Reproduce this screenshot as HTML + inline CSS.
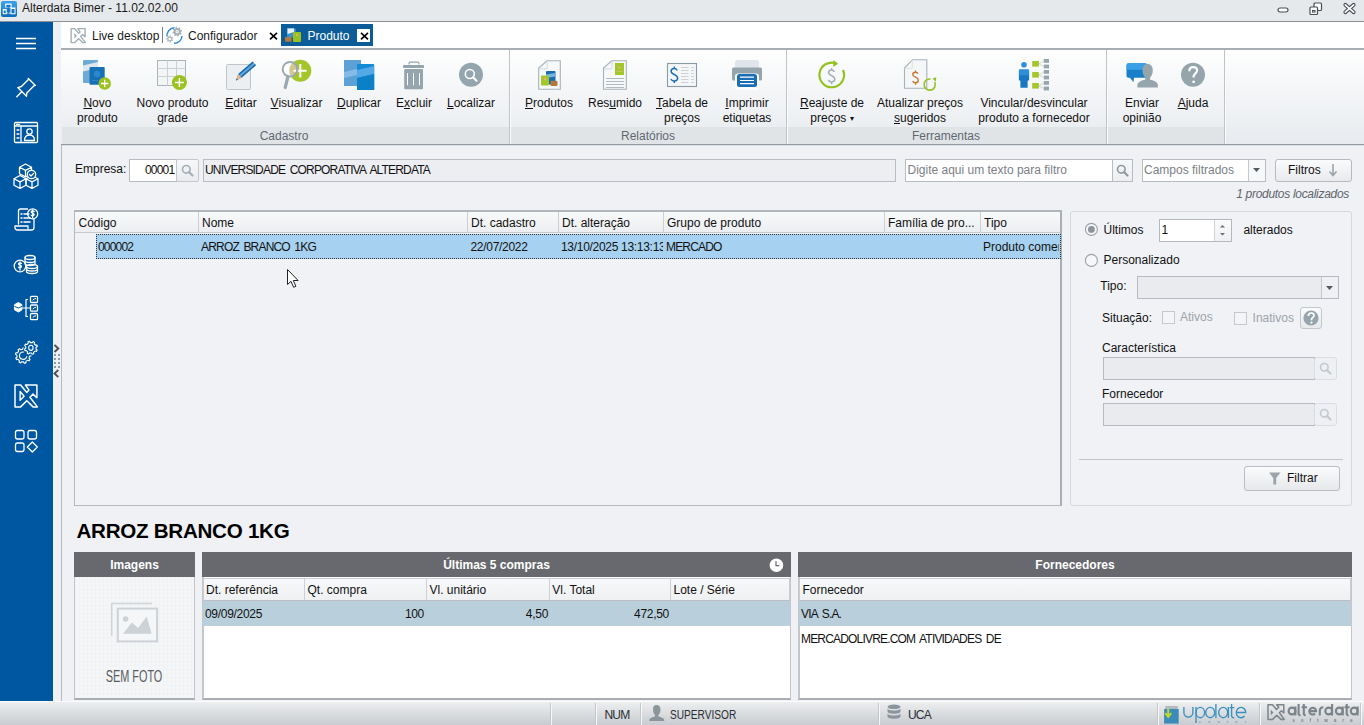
<!DOCTYPE html>
<html><head><meta charset="utf-8">
<style>
*{margin:0;padding:0;box-sizing:border-box}
html,body{width:1364px;height:725px;overflow:hidden;background:#eff1f5;font-family:"Liberation Sans",sans-serif;font-size:12px;color:#1e1e1e;position:relative}
.a{position:absolute}
svg{position:absolute;overflow:visible}
.t{position:absolute;white-space:nowrap;line-height:14px}
.u{letter-spacing:-0.82px;word-spacing:2px}
.d{letter-spacing:-0.3px}
#title{left:0;top:0;width:1364px;height:22px;background:#e6e9ec;border-bottom:1px solid #8d9197}
#side{left:0;top:22px;width:53px;height:679px;background:#0057a1}
#strip{left:53px;top:22px;width:8px;height:679px;background:#eef0f4}
#tabs{left:61px;top:22px;width:1303px;height:26px;background:#fff}
#ribbon{left:61px;top:48px;width:1303px;height:97px;border-top:2px solid #a9aeb4;border-bottom:1px solid #92979d;background:linear-gradient(#fefefe 0%,#f3f5f7 45%,#e8ebef 100%)}
.band{position:absolute;top:127px;height:17px;background:#e1e4e7}
.rb{position:absolute;top:95.6px;width:120px;text-align:center;line-height:15px;white-space:nowrap;color:#111}
.rb i{font-style:normal;text-decoration:underline}
.gl{position:absolute;top:129px;color:#5f6870;line-height:14px;width:200px;text-align:center}
.sep{position:absolute;top:50px;width:2px;height:94px;border-left:1px solid #bfc4c9;border-right:1px solid #fbfbfc}
#status{left:0;top:701px;width:1364px;height:24px;background:linear-gradient(#eceef0,#c9ccd0);border-top:1px solid #fbfbfc}
.inp{position:absolute;background:#fff;border:1px solid #b8bcc2}
.dis{position:absolute;background:#e8eaee;border:1px solid #b8bcc2}
.btn{position:absolute;border:1px solid #b5b9bf;border-radius:2px;background:linear-gradient(#fbfbfc,#e4e7ea)}
.sb{position:absolute;left:0;width:53px}
</style></head><body>
<!-- Title bar -->
<div id="title" class="a">
  <div class="t" style="left:22px;top:1px;color:#1a1a1a">Alterdata Bimer - 11.02.02.00</div>
</div>
<svg style="left:1px;top:1px" width="16" height="16" viewBox="1 1 16 16"><defs><linearGradient id="tg" x1="0" y1="0" x2="0" y2="1"><stop offset="0" stop-color="#3a9fe8"/><stop offset=".45" stop-color="#2b92e0"/><stop offset=".5" stop-color="#167ccc"/><stop offset="1" stop-color="#0d6cbc"/></linearGradient></defs><rect x="1" y="1" width="16" height="16" rx="2" fill="url(#tg)"/><path d="M5.2 3.6h6.4v4h-6.4z M2.7 9h4v5.3h-4z M10.5 7.6h5v6.7h-5z" fill="#fff"/><path d="M6.3 4.7h4.2v2.5h-4.2z M3.7 10.6h2v2.7h-2z M11.5 9h3v4.3h-3z" fill="#1277c6"/><path d="M6.7 13h3.8" stroke="#fff" stroke-width="1"/><path d="M8.4 7.6v6" stroke="#1277c6" stroke-width="1.2"/></svg>
<svg style="left:1277px;top:7px" width="12" height="6"><rect x="1" y="1" width="10" height="4" rx="2" fill="#fff" stroke="#4a4d55" stroke-width="1.2"/></svg>
<svg style="left:1309px;top:2px" width="14" height="13"><rect x="5" y="1" width="7.5" height="7.5" rx="1" fill="#fff" stroke="#4a4d55" stroke-width="1.2"/><rect x="1" y="5" width="7.5" height="7.5" rx="1" fill="#fff" stroke="#4a4d55" stroke-width="1.2"/><rect x="3.5" y="8.5" width="2.5" height="1.6" fill="none" stroke="#4a4d55" stroke-width="1"/></svg>
<svg style="left:1343px;top:3px" width="13" height="11"><path d="M2.3 1.8L10.7 9.2M10.7 1.8L2.3 9.2" stroke="#4a4d55" stroke-width="3.8" stroke-linecap="round"/><path d="M2.3 1.8L10.7 9.2M10.7 1.8L2.3 9.2" stroke="#fff" stroke-width="1.6" stroke-linecap="round"/></svg>

<!-- Sidebar -->
<div id="side" class="a"></div>
<div id="strip" class="a"></div>
<div class="a" style="left:61px;top:145px;width:1303px;height:1px;background:#dde0e4"></div>
<div class="a" style="left:61px;top:145px;width:1px;height:556px;background:#b5bac1"></div>
<svg style="left:0;top:0" width="53" height="700" fill="none" stroke="#fff" stroke-width="1.3" stroke-linejoin="round" stroke-linecap="round">
<!-- hamburger -->
<path d="M16 38.5h20M16 43.5h20M16 48.5h20" stroke-width="1.4" stroke-linecap="butt"/>
<!-- pin -->
<path d="M16.8 96.8l4.7-4.7M17.8 87.6l3.6-1.1 6.8-6.8.2-1.3 7 7-1.4.3-7.2 7.2-.3 3.3z" stroke-width="1.4"/>
<!-- contact card -->
<rect x="14.5" y="122.5" width="23" height="20" rx="1"/>
<path d="M14.5 126h23M21 126v16.5M16.5 124.3h3M17 130h2M17 134h2M17 138h2"/>
<circle cx="29.5" cy="131.5" r="2.7"/>
<path d="M24.5 140.5c0-3.5 2-5.3 5-5.3s5 1.8 5 5.3z"/>
<!-- boxes -->
<path d="M25.5 164l6 3.2v6.5l-6 3.2-6-3.2v-6.5z M19.5 167.2l6 3.2 6-3.2M25.5 170.4v6.5"/>
<path d="M20 175.5l6 3.2v6.5l-6 3.2-6-3.2v-6.5z M14 178.7l6 3.2 6-3.2M20 181.9v6.5"/>
<path d="M32 175.5l6 3.2v6.5l-6 3.2-6-3.2v-6.5z M26 178.7l6 3.2 6-3.2M32 181.9v6.5"/>
<circle cx="31.5" cy="174.5" r="4.2" fill="#0057a1"/>
<path d="M29.5 174.5l1.5 1.5 2.5-2.5"/>
<!-- doc $ -->
<path d="M18.5 224v-13a2 2 0 0 1 2-2h7M34 219v8.5a2.5 2.5 0 0 1-2.5 2.5h-14a2.5 2.5 0 0 1-2.5-2.5v-1.5h13v2.5"/>
<circle cx="32.7" cy="213.8" r="5"/>
<path d="M34.2 211.5c-.5-.8-3-1-3 .5s3 1 3 2.6-2.5 1.5-3 .6M32.7 210v7.6"/>
<path d="M21 214h1M21 218h1M21 222h1M24 214h5M24 218h6M24 222h6" stroke-width="1.5"/>
<!-- coins -->
<circle cx="20" cy="266" r="5.8"/>
<path d="M21.5 263.5c-.5-.8-3-1-3 .5s3 1 3 2.6-2.5 1.5-3 .6M20 262v8"/>
<ellipse cx="30" cy="257.5" rx="5" ry="2"/>
<path d="M25 257.5v6c0 1.1 2.2 2 5 2s5-.9 5-2v-6M25 260.5c0 1.1 2.2 2 5 2s5-.9 5-2"/>
<ellipse cx="32" cy="266.5" rx="5.5" ry="2"/>
<path d="M26.5 266.5v5c0 1.1 2.5 2 5.5 2s5.5-.9 5.5-2v-5M26.5 269c0 1.1 2.5 2 5.5 2s5.5-.9 5.5-2"/>
<!-- hierarchy -->
<path d="M27.5 299.5h-1.5v17h1.5M26 308h4M22.5 308h3.5" stroke-width="1.2"/>
<rect x="30.5" y="296.3" width="7" height="6.2" rx="1"/><rect x="30.5" y="305" width="7" height="6.2" rx="1"/><rect x="30.5" y="313.5" width="7" height="6.2" rx="1"/>
<path d="M33 300l1.2-1 1.5-.5M33 308.8l1.2-1 1.5-.5M33 317.3l1.2-1 1.5-.5" stroke-width="1"/>
<path d="M14.8 304.5l3.5-2 3.5 2v5.5l-3.5 2-3.5-2z" fill="#fff" stroke-width="1"/>
<path d="M14.8 306.5l3.5 1.5 3.5-1.5" stroke="#0057a1" stroke-width="1"/>
<!-- gears -->
<path d="M36.07 348.32 L35.95 349.04 L37.13 349.97 L36.40 351.46 L34.94 351.07 L34.19 351.83 L33.59 352.25 L33.77 353.74 L32.20 354.27 L31.44 352.97 L30.38 352.97 L29.66 352.85 L28.73 354.03 L27.24 353.30 L27.63 351.84 L26.87 351.09 L26.45 350.49 L24.96 350.67 L24.43 349.10 L25.73 348.34 L25.73 347.28 L25.85 346.56 L24.67 345.63 L25.40 344.14 L26.86 344.53 L27.61 343.77 L28.21 343.35 L28.03 341.86 L29.60 341.33 L30.36 342.63 L31.42 342.63 L32.14 342.75 L33.07 341.57 L34.56 342.30 L34.17 343.76 L34.93 344.51 L35.35 345.11 L36.84 344.93 L37.37 346.50 L36.07 347.26z" stroke-width="1.1"/>
<ellipse cx="30.9" cy="347.8" rx="2.2" ry="2.6" stroke-width="1.1"/>
<path d="M31.00 355.87 L29.46 356.34 L29.22 357.46 L28.94 358.20 L30.01 359.40 L29.00 360.82 L27.51 360.19 L26.61 360.89 L25.92 361.28 L25.97 362.89 L24.29 363.32 L23.55 361.89 L22.41 361.85 L21.63 361.70 L20.64 362.97 L19.07 362.22 L19.43 360.65 L18.58 359.88 L18.08 359.27 L16.50 359.60 L15.78 358.01 L17.07 357.04 L16.91 355.91 L16.92 355.12 L15.50 354.35 L15.97 352.68 L17.58 352.76 L18.18 351.79 L18.70 351.19 L18.10 349.70 L19.54 348.71 L20.72 349.81 L21.80 349.46 L22.58 349.33 L23.09 347.80" stroke-width="1.1"/>
<path d="M26.8 356.5A3.7 3.7 0 1 1 23.5 352" stroke-width="1.1"/>
<!-- X logo -->
<path d="M15 385h5.6l6.2 7.4 2.2-2.3-3.6-5.1h11.5v12.7l-3.9-3.6-3.1 3.1 7.5 9.7h-4.4l-6.2-6.2-6.2 6.2h-5.6z" stroke-width="1.5"/>
<path d="M20.1 391.5l4 4.8-4 4z" stroke-width="1.4"/>
<!-- apps -->
<rect x="15.5" y="430.5" width="8.5" height="8.5" rx="2"/>
<rect x="28" y="430.5" width="8.5" height="8.5" rx="2"/>
<rect x="15.5" y="443" width="8.5" height="8.5" rx="2"/>
<path d="M32.3 442l5 5-5 5-5-5z"/>
</svg>
<svg style="left:53px;top:344px" width="8" height="34"><path d="M1.5 1l3.8 3.5-3.8 3.5M5.3 26l-3.8 3.5 3.8 3.5" fill="none" stroke="#4d5156" stroke-width="1.9"/><g fill="#8b9ca2"><rect x="1" y="10" width="2" height="2"/><rect x="5" y="10" width="2" height="2"/><rect x="1" y="14" width="2" height="2"/><rect x="5" y="14" width="2" height="2"/><rect x="1" y="18" width="2" height="2"/><rect x="5" y="18" width="2" height="2"/><rect x="1" y="22" width="2" height="2"/><rect x="5" y="22" width="2" height="2"/></g></svg>

<!-- Tabs -->
<div id="tabs" class="a"></div>
<svg style="left:70px;top:28px" width="16" height="15" viewBox="14 384 23.5 23.5"><path d="M15 385h5.6l6.2 7.4 2.2-2.3-3.6-5.1h11.5v12.7l-3.9-3.6-3.1 3.1 7.5 9.7h-4.4l-6.2-6.2-6.2 6.2h-5.6z" fill="none" stroke="#a3afb5" stroke-width="2.2" stroke-linejoin="round"/><path d="M20.1 391.5l4 4.8-4 4z" fill="#a3afb5"/></svg>
<div class="t" style="left:92px;top:28.5px;color:#1a1a1a">Live desktop</div>
<div class="a" style="left:162px;top:27px;width:1px;height:16px;background:#7a7d82"></div>
<svg style="left:166px;top:27px" width="17" height="17" viewBox="0 0 17 17"><path d="M1 9.5A7.8 7.8 0 0 1 8.5 0.8" fill="none" stroke="#2f8ddb" stroke-width="1.5"/><path d="M16 9A7.8 7.8 0 0 1 8 16.3" fill="none" stroke="#2f8ddb" stroke-width="1.5"/><path d="M14.83 5.44 L14.71 5.86 L15.64 6.77 L15.04 7.75 L13.81 7.33 L13.24 7.78 L12.87 8.00 L12.88 9.30 L11.76 9.57 L11.19 8.40 L10.46 8.33 L10.04 8.21 L9.13 9.14 L8.15 8.54 L8.57 7.31 L8.12 6.74 L7.90 6.37 L6.60 6.38 L6.33 5.26 L7.50 4.69 L7.57 3.96 L7.69 3.54 L6.76 2.63 L7.36 1.65 L8.59 2.07 L9.16 1.62 L9.53 1.40 L9.52 0.10 L10.64 -0.17 L11.21 1.00 L11.94 1.07 L12.36 1.19 L13.27 0.26 L14.25 0.86 L13.83 2.09 L14.28 2.66 L14.50 3.03 L15.80 3.02 L16.07 4.14 L14.90 4.71z" fill="#a6b0b6"/><circle cx="11.2" cy="4.7" r="1.6" fill="#fff"/><circle cx="11.2" cy="4.7" r=".7" fill="#a6b0b6"/><path d="M6.49 12.17 L6.43 12.53 L7.25 13.24 L6.77 14.11 L5.73 13.79 L5.26 14.17 L4.95 14.34 L4.91 15.43 L3.93 15.60 L3.53 14.59 L2.94 14.46 L2.60 14.32 L1.73 14.97 L0.99 14.31 L1.53 13.36 L1.26 12.82 L1.16 12.47 L0.11 12.19 L0.17 11.20 L1.24 11.04 L1.50 10.49 L1.71 10.20 L1.27 9.20 L2.08 8.62 L2.88 9.36 L3.46 9.22 L3.83 9.20 L4.33 8.24 L5.29 8.51 L5.21 9.60 L5.69 9.97 L5.93 10.24 L7.00 10.03 L7.38 10.95 L6.48 11.56z" fill="#b3bcc1"/><circle cx="3.8" cy="11.9" r="1.2" fill="#fff"/></svg>
<div class="t" style="left:188px;top:28.5px;color:#1a1a1a">Configurador</div>
<svg style="left:269px;top:32px" width="9" height="8"><path d="M1 .8l7 6.5M8 .8l-7 6.5" stroke="#000" stroke-width="1.6"/></svg>
<div class="a" style="left:281px;top:24px;width:92px;height:22px;background:#0b5c98"></div>
<svg style="left:285px;top:27px" width="17" height="16"><path d="M2 1h7.5l1.5 1.5v8H2z" fill="#3c8fd6"/><path d="M2.5 1.5h6.5v3.5l-6.5 2z" fill="#e8f2fb"/><rect x="0" y="10" width="6.6" height="4.8" rx=".8" fill="#b07a3e"/><rect x="8" y="5" width="8" height="10" rx="1" fill="#97c11f"/><circle cx="12" cy="8" r="1" fill="#f4a88a"/></svg>
<div class="t" style="left:307.5px;top:28.5px;color:#fff">Produto</div>
<div class="a" style="left:357px;top:29px;width:13px;height:13px;background:#fff"></div>
<svg style="left:359.5px;top:31.5px" width="9" height="8"><path d="M1 .8l7 6.5M8 .8l-7 6.5" stroke="#000" stroke-width="1.6"/></svg>

<!-- Ribbon -->
<div id="ribbon" class="a"></div>
<div class="band" style="left:62px;width:1162px"></div>
<div class="sep" style="left:509px"></div>
<div class="sep" style="left:786px"></div>
<div class="sep" style="left:1106px"></div>
<div class="sep" style="left:1224px"></div>
<div class="gl" style="left:184px">Cadastro</div>
<div class="gl" style="left:548px">Relatórios</div>
<div class="gl" style="left:846px">Ferramentas</div>
<div class="rb" style="left:37.4px"><i>N</i>ovo<br>produto</div>
<div class="rb" style="left:112.5px">Novo produto<br><i>g</i>rade</div>
<div class="rb" style="left:181px"><i>E</i>ditar</div>
<div class="rb" style="left:236.5px"><i>V</i>isualizar</div>
<div class="rb" style="left:299px"><i>D</i>uplicar</div>
<div class="rb" style="left:354px">E<i>x</i>cluir</div>
<div class="rb" style="left:411px"><i>L</i>ocalizar</div>
<div class="rb" style="left:489px"><i>P</i>rodutos</div>
<div class="rb" style="left:555px">Res<i>u</i>mido</div>
<div class="rb" style="left:622px"><i>T</i>abela de<br>preços</div>
<div class="rb" style="left:687px"><i>I</i>mprimir<br>etiquetas</div>
<div class="rb" style="left:772px"><i>R</i>eajuste de<br>preços <span style="font-size:8px;vertical-align:1px">▾</span></div>
<div class="rb" style="left:860px">Atualizar preços<br><i>s</i>ugeridos</div>
<div class="rb" style="left:974px">Vincular/desvincular<br>produto a fornecedor</div>
<div class="rb" style="left:1082px">Enviar<br>opinião</div>
<div class="rb" style="left:1133px"><i>A</i>juda</div>
<svg style="left:0;top:0" width="1364" height="145">
<!-- novo produto -->
<rect x="83" y="60" width="15" height="23" rx="1" fill="#6eaad6"/>
<path d="M83 65.5l15-3.5v6l-15 3.5z" fill="#dfe7ee"/>
<rect x="89.5" y="67" width="15.2" height="17.8" rx="1" fill="#1670b5"/>
<circle cx="97" cy="74" r="3.2" fill="#2d86d0"/>
<path d="M92 80.5h6" stroke="#3b8bd0" stroke-width=".8"/>
<circle cx="104.7" cy="83.5" r="6.2" fill="#9cc21f"/>
<path d="M101 83.5h7.4M104.7 79.8v7.4" stroke="#fff" stroke-width="1.3"/>
<!-- novo produto grade -->
<rect x="157.5" y="60.5" width="28" height="25" fill="#f3f5f7" stroke="#aab4bb"/>
<path d="M167.5 60.5v25M176.5 60.5v25M157.5 68.5h28M157.5 76.5h28" stroke="#c8d0d6"/>
<circle cx="179.4" cy="82.5" r="7.5" fill="#9cc21f"/>
<path d="M175 82.5h8.8M179.4 78.1v8.8" stroke="#fff" stroke-width="1.5"/>
<!-- editar -->
<rect x="226.5" y="64.5" width="24" height="25" rx="1.2" fill="#eceff2" stroke="#bfc5cb"/>
<path d="M236 80.5l2.2-6.5 14.5-12.5 3.3 3.8-14.5 12.5z" fill="#6aa9d6"/>
<path d="M238.2 74l14.5-12.5 1 1.2-14.5 12.5zM241.5 77.8l14.5-12.5-1-1.2-14.5 12.5z" fill="#1a6fb4"/>
<path d="M236 80.5l2.2-6.5 3.3 3.8z" fill="#e8b47a"/>
<path d="M236 80.5l.8-2.3 1.3 1.5z" fill="#1a6fb4"/>
<!-- visualizar -->
<circle cx="300.3" cy="70.7" r="11" fill="#a5c62a"/>
<circle cx="290" cy="69.3" r="7.3" fill="#fff"/>
<clipPath id="lens"><circle cx="290" cy="69.3" r="7.3"/></clipPath>
<circle cx="300.3" cy="70.7" r="11" fill="#d3c592" clip-path="url(#lens)"/>
<path d="M293.5 70.7h13M300.3 64v13.5" stroke="#fff" stroke-width="2"/>
<circle cx="290" cy="69.3" r="7.3" fill="none" stroke="#9aa9b1" stroke-width="2"/>
<path d="M288 76.5l-2.8 11" stroke="#9aa9b1" stroke-width="3.2" stroke-linecap="round"/>
<!-- duplicar -->
<rect x="344" y="60" width="17" height="26" fill="#5da0d6"/>
<path d="M344 72l17-4v6l-17 4z" fill="#85bbe6"/>
<rect x="357" y="64" width="17.2" height="26" rx="1" fill="#138bd4"/>
<path d="M357 70l17.2-4v8l-17.2 4z" fill="#52a9e6"/>
<path d="M357 78l17.2-4v16h-17.2z" fill="#0b80c6"/>
<!-- excluir -->
<g fill="#94a5ad"><path d="M408.5 64.5v-1.5a1.5 1.5 0 0 1 1.5-1.5h8a1.5 1.5 0 0 1 1.5 1.5v1.5h-1.2v-1.7h-8.6v1.7z"/><rect x="403" y="65" width="21" height="3" rx=".8"/><rect x="404.2" y="69" width="18.8" height="20.2" rx="1"/></g>
<path d="M407.5 73v12.3M413.5 73v12.3M419.5 73v12.3" stroke="#fff" stroke-width="1"/>
<!-- localizar -->
<circle cx="471" cy="74.8" r="12" fill="#94a5ad"/>
<circle cx="469.8" cy="74" r="4.5" fill="none" stroke="#fff" stroke-width="1.6"/>
<path d="M473 77.2l3.5 3.5" stroke="#fff" stroke-width="2" stroke-linecap="round"/>
</svg>
<svg style="left:0;top:0" width="1364" height="145">
<!-- produtos -->
<path d="M538.7 68l8.3-7.2h13.3v28.4h-21.6z" fill="#f6f8fa" stroke="#a7b3b9" stroke-width="1.1"/>
<path d="M547.2 61v7.8h-8" fill="none" stroke="#d5dbe0" stroke-width="1"/>
<rect x="546" y="71" width="9.5" height="13.5" rx="1" fill="#1a6db0"/>
<path d="M546 74.5l9.5-1.5v3.5l-9.5 1.5z" fill="#78b4e0"/>
<rect x="541" y="75.5" width="8" height="10" rx=".8" fill="#a2c72a"/>
<circle cx="545" cy="79" r="1.2" fill="#f0a889"/>
<rect x="550.5" y="80.8" width="7" height="5.3" rx="1" fill="#b07a3e"/>
<!-- resumido -->
<path d="M603.5 68l8.3-7.2h14.5v28.4h-22.8z" fill="#f6f8fa" stroke="#a7b3b9" stroke-width="1.1"/>
<path d="M612 61v7.8h-8" fill="none" stroke="#d5dbe0" stroke-width="1"/>
<rect x="615" y="63" width="9" height="12" fill="#a2c72a"/>
<circle cx="619.3" cy="67.4" r="1.2" fill="#f0a889"/>
<path d="M616.5 71.5h6" stroke="#e3b98e" stroke-width=".7"/>
<path d="M606 78.5h18M606 81.5h18M606 84.5h18M606 87.5h18" stroke="#a7b3b9" stroke-width=".9"/>
<!-- tabela -->
<rect x="667.5" y="63.5" width="29" height="23" fill="#f4f6f8" stroke="#8a9ba3" stroke-width="1.1"/>
<path d="M677.3 70.3c-.8-1.2-2-1.8-3.2-1.8-1.8 0-3 1.1-3 2.8 0 3.8 6.5 2.6 6.5 6.8 0 1.8-1.4 3-3.3 3-1.4 0-2.6-.7-3.4-1.9M674.3 66.5v2M674.3 81.1v2" fill="none" stroke="#1a6fb4" stroke-width="1.5"/>
<path d="M681 67.5h7.5M691 67.5h3M681 70.5h7.5M691 70.5h3M681 73.5h7.5M691 73.5h3M681 76.5h7.5M691 76.5h3M681 79.5h7.5M691 79.5h3M681 82.5h7.5M691 82.5h3" stroke="#c7ced3" stroke-width=".9"/>
<!-- imprimir -->
<rect x="735" y="60" width="24" height="10" rx="2.5" fill="#dfe5eb"/>
<rect x="732" y="67.5" width="30" height="13" rx="1.5" fill="#95a5ab"/>
<rect x="735" y="73.5" width="24" height="16" rx="3" fill="#fff"/>
<rect x="737" y="74" width="20" height="13" rx="2.5" fill="#1a6fb4"/>
<path d="M740 77.2h14M740 80.5h14M740 83.7h14" stroke="#fff" stroke-width="1.2"/>
</svg>
<svg style="left:0;top:0" width="1364" height="145">
<!-- reajuste -->
<path d="M836.5 63.6A12.3 12.3 0 1 0 843 70" fill="none" stroke="#94c11f" stroke-width="2.2"/>
<path d="M833.5 60l4.5 3.8-4.8 3.3z" fill="#94c11f"/>
<g transform="translate(0,1.6)"><path d="M834.5 70.2c-.7-1.3-1.8-1.9-3-1.9-1.7 0-2.9 1.1-2.9 2.7 0 3.7 6.2 2.5 6.2 6.5 0 1.7-1.3 2.8-3.1 2.8-1.4 0-2.6-.7-3.3-1.9M831.6 66.4v1.9M831.6 80.4v2.2" fill="none" stroke="#a3b0b7" stroke-width="1.5"/></g>
<!-- atualizar -->
<path d="M904.5 68l8-8.3h14.3v28.6h-22.3z" fill="#f4f6f8" stroke="#a7b3b9" stroke-width="1.1"/>
<path d="M912.3 60v8.3h-7.8" fill="none" stroke="#dfe3e7" stroke-width="1"/>
<g transform="translate(0,1.5)"><path d="M918 72.2c-.6-1-1.6-1.5-2.7-1.5-1.5 0-2.5.9-2.5 2.3 0 3.2 5.5 2.2 5.5 5.7 0 1.5-1.2 2.5-2.8 2.5-1.2 0-2.3-.6-2.9-1.6M915.5 69v1.7M915.5 81.2v2" fill="none" stroke="#c8772a" stroke-width="1.4"/></g>
<path d="M934.7 82A5.6 5.6 0 1 1 930.5 79" fill="none" stroke="#94c11f" stroke-width="1.6"/>
<path d="M932.5 78.5l3.8-1.2-.5 4.5z" fill="#94c11f"/>
<!-- vincular -->
<circle cx="1024" cy="64.8" r="2.8" fill="#2e8fdb"/>
<path d="M1020.2 69.5h7.6a1.3 1.3 0 0 1 1.3 1.3v9.7h-1.5v7.2h-7.2v-7.2h-1.5v-9.7a1.3 1.3 0 0 1 1.3-1.3z" fill="#1a78c2"/>
<path d="M1020.2 69.5h7.6a1.3 1.3 0 0 1 1.3 1.3v4.5h-10.2v-4.5a1.3 1.3 0 0 1 1.3-1.3z" fill="#2e8fdb"/>
<g fill="#a5c62a"><rect x="1032.2" y="61" width="6.7" height="5.6"/><rect x="1032.2" y="72" width="6.7" height="5.6"/><rect x="1032.2" y="83" width="6.7" height="5.6"/></g>
<g fill="#97a6ad"><rect x="1043.8" y="59" width="5.2" height="3.8"/><rect x="1043.8" y="64.6" width="5.2" height="3.8"/><rect x="1043.8" y="70" width="5.2" height="3.8"/><rect x="1043.8" y="75.6" width="5.2" height="3.8"/><rect x="1043.8" y="81" width="5.2" height="3.8"/><rect x="1043.8" y="86.6" width="5.2" height="3.8"/></g>
<path d="M1043.8 61l-4.9 2.8 4.9 2.8M1043.8 72l-4.9 2.8 4.9 2.8M1043.8 83l-4.9 2.8 4.9 2.8" fill="none" stroke="#c4ccd1" stroke-width=".8"/>
<!-- enviar opiniao -->
<path d="M1128.5 63.3h16.5a2 2 0 0 1 2 2v10.5a2 2 0 0 1-2 2h-11l-.5 4.4-3.6-4.4h-1.4a2 2 0 0 1-2-2v-10.5a2 2 0 0 1 2-2z" fill="#1a7fc9"/>
<path d="M1128.5 63.3h16.5a2 2 0 0 1 2 2v4.5h-20.5v-4.5a2 2 0 0 1 2-2z" fill="#3aa0e6"/>
<path d="M1147.5 64c3.5 0 5.3 2.5 5.3 6.3 0 3-1.2 5.8-2.7 7.2v2.3c3.3.6 7 2 7.6 4.5.2 1 .2 2.5.2 3.2h-20.5c0-.7 0-2.2.2-3.2.6-2.5 4.3-3.9 7.6-4.5v-2.3c-1.5-1.4-2.7-4.2-2.7-7.2 0-3.8 1.8-6.3 5-6.3z" fill="#95a5ab"/>
<!-- ajuda -->
<circle cx="1193" cy="74.8" r="12" fill="#95a5ab"/>
<path d="M1189.3 71.2c0-2.5 1.7-4 3.9-4 2.3 0 3.9 1.4 3.9 3.4 0 2.8-3.5 3-3.5 6v.8" fill="none" stroke="#fff" stroke-width="2.2"/>
<circle cx="1193.6" cy="81.8" r="1.4" fill="#fff"/>
</svg>
<!--RICONS4-->

<div class="t" style="left:75px;top:162px;color:#111">Empresa:</div>
<div class="inp" style="left:129px;top:159px;width:48px;height:23px"></div>
<div class="t u" style="left:145px;top:163px;color:#111">00001</div>
<div class="btn" style="left:176px;top:159px;width:23px;height:23px;border-color:#c4c8cd;background:linear-gradient(#f7f8f9,#e9ebee)"></div>
<svg style="left:181px;top:164px" width="13" height="13"><circle cx="5.3" cy="5.3" r="3.8" fill="none" stroke="#a4afb5" stroke-width="1.6"/><path d="M8 8l3.5 3.5" stroke="#a4afb5" stroke-width="2.2" stroke-linecap="round"/></svg>
<div class="dis" style="left:203px;top:159px;width:693px;height:23px;background:#eceef1;border-color:#b9bdc3"></div>
<div class="t u" style="left:205px;top:163px;color:#111">UNIVERSIDADE CORPORATIVA ALTERDATA</div>
<div class="inp" style="left:905px;top:159px;width:208px;height:23px"></div>
<div class="t" style="left:907.5px;top:163px;color:#7b8086">Digite aqui um texto para filtro</div>
<div class="btn" style="left:1112px;top:159px;width:21px;height:23px;border-radius:0;border-color:#b8bcc2;background:linear-gradient(#f7f8f9,#eceef1)"></div>
<svg style="left:1116px;top:164px" width="13" height="13"><circle cx="5.3" cy="5.3" r="3.8" fill="none" stroke="#8e999f" stroke-width="1.6"/><path d="M8 8l3.5 3.5" stroke="#8e999f" stroke-width="2.2" stroke-linecap="round"/></svg>
<div class="inp" style="left:1142px;top:159px;width:124px;height:23px"></div>
<div class="t" style="left:1144px;top:163px;color:#7b8086">Campos filtrados</div>
<div class="a" style="left:1248px;top:160px;width:17px;height:21px;border-left:1px solid #c4c8cd;background:#f7f8f9"></div>
<svg style="left:1253px;top:168px" width="8" height="5"><path d="M0 0h7l-3.5 4z" fill="#555a60"/></svg>
<div class="btn" style="left:1275px;top:159px;width:77px;height:23px;border-color:#b6bac0;border-radius:3px;background:linear-gradient(#fafbfc,#e8eaed)"></div>
<div class="t" style="left:1288px;top:163px;color:#111">Filtros</div>
<svg style="left:1328px;top:163px" width="10" height="15"><path d="M5 1v11M1.5 8.5L5 12.5l3.5-4" fill="none" stroke="#9aa5ab" stroke-width="1.6"/></svg>
<div class="t" style="left:1100px;top:187px;width:249px;text-align:right;font-style:italic;color:#60656b;letter-spacing:-0.3px">1 produtos localizados</div>
<div class="a" style="left:74px;top:210px;width:988px;height:296px;background:#f0f2f6;border:1px solid #b4b9be;border-top:2px solid #b1b6bb;border-right:2px solid #a9aeb3"></div>
<div class="a" style="left:75px;top:212px;width:985px;height:21px;background:linear-gradient(#f8f9fa,#eceef1);border-bottom:1px solid #c6cace"></div>
<div class="a" style="left:198px;top:212px;width:1px;height:21px;background:#ccd0d4"></div>
<div class="a" style="left:467px;top:212px;width:1px;height:21px;background:#ccd0d4"></div>
<div class="a" style="left:558px;top:212px;width:1px;height:21px;background:#ccd0d4"></div>
<div class="a" style="left:663px;top:212px;width:1px;height:21px;background:#ccd0d4"></div>
<div class="a" style="left:884px;top:212px;width:1px;height:21px;background:#ccd0d4"></div>
<div class="a" style="left:980px;top:212px;width:1px;height:21px;background:#ccd0d4"></div>
<div class="t" style="left:78.5px;top:215.5px;color:#111">Código</div>
<div class="t" style="left:202px;top:215.5px;color:#111">Nome</div>
<div class="t" style="left:471px;top:215.5px;color:#111">Dt. cadastro</div>
<div class="t" style="left:562px;top:215.5px;color:#111">Dt. alteração</div>
<div class="t" style="left:667px;top:215.5px;color:#111">Grupo de produto</div>
<div class="t" style="left:888px;top:215.5px;color:#111">Família de pro...</div>
<div class="t" style="left:984px;top:215.5px;color:#111">Tipo</div>
<div class="a" style="left:96px;top:233.5px;width:965px;height:25px;background:#a7d1f0;border:1px dotted #333"></div>
<div class="t u" style="left:98px;top:239.5px;color:#111">000002</div>
<div class="t u" style="left:201px;top:239.5px;color:#111">ARROZ BRANCO 1KG</div>
<div class="t" style="left:470.5px;top:239.5px;color:#111;letter-spacing:-0.3px">22/07/2022</div>
<div class="a" style="left:561px;top:236px;width:102px;height:20px;overflow:hidden"><div class="t" style="left:0;top:3.5px;color:#111;letter-spacing:-0.3px">13/10/2025 13:13:13</div></div>
<div class="t u" style="left:666px;top:239.5px;color:#111">MERCADO</div>
<div class="a" style="left:983px;top:236px;width:76px;height:20px;overflow:hidden"><div class="t" style="left:0;top:3.5px;color:#111">Produto comercial</div></div>
<svg style="left:286px;top:268px" width="14" height="22"><path d="M1.5 1.5v15l3.5-3.2 2.6 6 2.3-1-2.6-5.8h4.8z" fill="#fff" stroke="#222" stroke-width="1"/></svg>
<div class="a" style="left:1070px;top:211px;width:282px;height:295px;border:1px solid #d5d9de;border-radius:3px;background:#f0f2f6"></div>
<svg style="left:1084px;top:222px" width="15" height="46"><circle cx="7.4" cy="7.4" r="6" fill="#f4f5f7" stroke="#9ca1a7" stroke-width="1.1"/><circle cx="7.4" cy="7.4" r="3.4" fill="#8d9399"/><circle cx="7.4" cy="38.4" r="6" fill="#f6f7f8" stroke="#9ca1a7" stroke-width="1.1"/></svg>
<div class="t" style="left:1103.5px;top:222.8px;color:#111">Últimos</div>
<div class="inp" style="left:1159px;top:219px;width:73px;height:23px;border-color:#b3b8be"></div>
<div class="t" style="left:1161.5px;top:222.8px;color:#111">1</div>
<div class="a" style="left:1214px;top:220px;width:17px;height:21px;border-left:1px solid #cfd3d7;background:linear-gradient(#fbfbfc,#eef0f2)"></div>
<svg style="left:1219px;top:224px" width="8" height="13"><path d="M1 3.5h5L3.5 1z M1 9h5l-2.5 2.5z" fill="#6a6f75"/></svg>
<div class="t" style="left:1243.4px;top:222.8px;color:#111">alterados</div>
<div class="t" style="left:1103.5px;top:252.6px;color:#111">Personalizado</div>
<div class="t" style="left:1100.3px;top:279.3px;color:#111">Tipo:</div>
<div class="dis" style="left:1137px;top:276px;width:202px;height:23px;background:#e9ebee;border-color:#b7bbc1"></div>
<div class="a" style="left:1321px;top:277px;width:17px;height:21px;border-left:1px solid #c4c8cd;background:#eef0f3"></div>
<svg style="left:1326px;top:285.5px" width="8" height="5"><path d="M0 0h7l-3.5 4z" fill="#555a60"/></svg>
<div class="t" style="left:1102px;top:310.7px;color:#111">Situação:</div>
<div class="a" style="left:1162px;top:310.8px;width:13px;height:13px;border:1px solid #c5c9ce;background:#f4f5f7"></div>
<div class="t" style="left:1180px;top:309.8px;color:#9ea3a8">Ativos</div>
<div class="a" style="left:1234px;top:311.8px;width:13px;height:13px;border:1px solid #c5c9ce;background:#f4f5f7"></div>
<div class="t" style="left:1252.6px;top:310.6px;color:#9ea3a8">Inativos</div>
<div class="btn" style="left:1300px;top:307px;width:22px;height:22px;border-color:#c3c7cc;border-radius:3px;background:linear-gradient(#fafbfb,#e7e9ec)"></div>
<svg style="left:1303px;top:310px" width="16" height="16"><circle cx="8" cy="8" r="7.6" fill="#95a5ab"/><path d="M5.4 5.9c0-1.8 1.2-2.9 2.8-2.9 1.7 0 2.8 1 2.8 2.4 0 2-2.5 2.2-2.5 4.3v.5" fill="none" stroke="#fff" stroke-width="1.7"/><circle cx="8.5" cy="12.6" r="1.1" fill="#fff"/></svg>
<div class="t" style="left:1102px;top:341px;color:#111">Característica</div>
<div class="dis" style="left:1103px;top:357px;width:212px;height:23px;background:#e9ebee;border-color:#b7bbc1"></div>
<div class="a" style="left:1314px;top:357px;width:23px;height:23px;border:1px solid #dadde1;border-radius:3px;background:#eef0f3"></div>
<svg style="left:1319px;top:362px" width="13" height="13"><circle cx="5.3" cy="5.3" r="3.8" fill="none" stroke="#c3c9cd" stroke-width="1.6"/><path d="M8 8l3.5 3.5" stroke="#c3c9cd" stroke-width="2.2" stroke-linecap="round"/></svg>
<div class="t" style="left:1102px;top:387px;color:#111">Fornecedor</div>
<div class="dis" style="left:1103px;top:403px;width:212px;height:23px;background:#e9ebee;border-color:#b7bbc1"></div>
<div class="a" style="left:1314px;top:403px;width:23px;height:23px;border:1px solid #dadde1;border-radius:3px;background:#eef0f3"></div>
<svg style="left:1319px;top:408px" width="13" height="13"><circle cx="5.3" cy="5.3" r="3.8" fill="none" stroke="#c3c9cd" stroke-width="1.6"/><path d="M8 8l3.5 3.5" stroke="#c3c9cd" stroke-width="2.2" stroke-linecap="round"/></svg>
<div class="a" style="left:1079px;top:459px;width:264px;height:1px;background:#bfc4c9"></div>
<div class="btn" style="left:1244px;top:466px;width:96px;height:25px;border-color:#b9bdc2;border-radius:3px;background:linear-gradient(#fafbfc,#e6e8eb)"></div>
<svg style="left:1269px;top:472px" width="12" height="13"><path d="M0 .5h11.5L7.2 6v6.5H4.3V6z" fill="#9aa4aa"/></svg>
<div class="t" style="left:1287px;top:470.5px;color:#111">Filtrar</div>
<div class="a" style="left:76.5px;top:518.6px;font-weight:bold;font-size:20.6px;line-height:24px;letter-spacing:-0.28px;white-space:nowrap;color:#000">ARROZ BRANCO 1KG</div>
<!-- Imagens -->
<div class="a" style="left:74px;top:552px;width:121px;height:25px;background:#67696e"></div>
<div class="t" style="left:74px;top:558px;width:121px;text-align:center;font-weight:bold;color:#fff">Imagens</div>
<div class="a" style="left:74px;top:577px;width:121px;height:123px;border:1px solid #c3c7cc;border-top:0;border-bottom:2px solid #a9aeb3;background-color:#f5f6f7;background-image:linear-gradient(#f1f2f4 1px,transparent 1px),linear-gradient(90deg,#f1f2f4 1px,transparent 1px);background-size:4px 4px"></div>
<svg style="left:0;top:0" width="200" height="700">
<path d="M152 603.5h-40.3v32.5" fill="none" stroke="#cfd4d8" stroke-width="1.6"/>
<rect x="117.8" y="608.6" width="39.3" height="32.8" fill="#f5f6f7" stroke="#cdd2d6" stroke-width="2"/>
<circle cx="125.6" cy="619" r="2.8" fill="#cdd2d6"/>
<path d="M122.9 633.8l9-11.3 6.2 5.4 8.6-11.3 4.9 17.2z" fill="#cdd2d6"/>
</svg>
<div class="a" style="left:134px;top:667px;font-size:16.5px;line-height:18px;white-space:nowrap;color:#575c62;transform:translateX(-50%) scaleX(0.66)">SEM FOTO</div>
<!-- Ultimas 5 compras -->
<div class="a" style="left:202px;top:552px;width:589px;height:25px;background:#67696e"></div>
<div class="t" style="left:202px;top:558px;width:589px;text-align:center;font-weight:bold;color:#fff">Últimas 5 compras</div>
<svg style="left:769px;top:557.5px" width="15" height="15"><circle cx="7.4" cy="7.2" r="6.8" fill="#fff"/><path d="M7 3.2v4.5h3.3" fill="none" stroke="#67696e" stroke-width="1.2"/></svg>
<div class="a" style="left:202px;top:577px;width:589px;height:123px;background:#fff;border-left:2px solid #c3c7cc;border-right:1px solid #c3c7cc;border-bottom:2px solid #a9aeb3"></div>
<div class="a" style="left:203px;top:578px;width:587px;height:23px;background:linear-gradient(#f7f8f9,#eef0f2);border:1px solid #c9cdd1;border-bottom-color:#babfc4"></div>
<div class="a" style="left:304px;top:579px;width:1px;height:21px;background:#cdd1d5"></div>
<div class="a" style="left:426px;top:579px;width:1px;height:21px;background:#cdd1d5"></div>
<div class="a" style="left:549px;top:579px;width:1px;height:21px;background:#cdd1d5"></div>
<div class="a" style="left:670px;top:579px;width:1px;height:21px;background:#cdd1d5"></div>
<div class="t" style="left:206px;top:582.5px;color:#111">Dt. referência</div>
<div class="t" style="left:307.5px;top:582.5px;color:#111">Qt. compra</div>
<div class="t" style="left:429.5px;top:582.5px;color:#111">Vl. unitário</div>
<div class="t" style="left:552.3px;top:582.5px;color:#111">Vl. Total</div>
<div class="t" style="left:673.5px;top:582.5px;color:#111">Lote / Série</div>
<div class="a" style="left:203px;top:601px;width:587px;height:24.5px;background:#b9d0dc"></div>
<div class="t d" style="left:205px;top:607px;color:#111">09/09/2025</div>
<div class="t d" style="left:324px;top:607px;width:100px;text-align:right;color:#111">100</div>
<div class="t d" style="left:448px;top:607px;width:100px;text-align:right;color:#111">4,50</div>
<div class="t d" style="left:569px;top:607px;width:100px;text-align:right;color:#111">472,50</div>
<!-- Fornecedores -->
<div class="a" style="left:798px;top:552px;width:554px;height:25px;background:#67696e"></div>
<div class="t" style="left:798px;top:558px;width:554px;text-align:center;font-weight:bold;color:#fff">Fornecedores</div>
<div class="a" style="left:798px;top:577px;width:554px;height:123px;background:#fff;border-left:2px solid #c3c7cc;border-right:1px solid #c3c7cc;border-bottom:2px solid #a9aeb3"></div>
<div class="a" style="left:799px;top:578px;width:552px;height:23px;background:linear-gradient(#f7f8f9,#eef0f2);border:1px solid #c9cdd1;border-bottom-color:#babfc4"></div>
<div class="t" style="left:802.5px;top:582.5px;color:#111">Fornecedor</div>
<div class="a" style="left:799px;top:601px;width:552px;height:24.5px;background:#b9d0dc"></div>
<div class="t u" style="left:801px;top:607px;color:#111">VIA S.A.</div>
<div class="t u" style="left:801px;top:632px;color:#111">MERCADOLIVRE.COM ATIVIDADES DE</div>

<div id="status" class="a"></div>
<div class="a" style="left:550px;top:703px;width:2px;height:22px;border-left:1px solid #c3c6ca;border-right:1px solid #f7f8f9"></div>
<div class="a" style="left:595px;top:703px;width:2px;height:22px;border-left:1px solid #c3c6ca;border-right:1px solid #f7f8f9"></div>
<div class="a" style="left:640px;top:703px;width:2px;height:22px;border-left:1px solid #c3c6ca;border-right:1px solid #f7f8f9"></div>
<div class="a" style="left:878px;top:703px;width:2px;height:22px;border-left:1px solid #c3c6ca;border-right:1px solid #f7f8f9"></div>
<div class="a" style="left:1157px;top:703px;width:2px;height:22px;border-left:1px solid #c3c6ca;border-right:1px solid #f7f8f9"></div>
<div class="a" style="left:1259px;top:703px;width:2px;height:22px;border-left:1px solid #c3c6ca;border-right:1px solid #f7f8f9"></div>
<div class="a" style="left:1360px;top:703px;width:2px;height:22px;border-left:1px solid #c3c6ca;border-right:1px solid #f7f8f9"></div>
<div class="t u" style="left:604.5px;top:708px;color:#2a2d31">NUM</div>
<svg style="left:649px;top:704px" width="16" height="17"><path d="M7.5 1c2.6 0 4 1.9 4 4.7 0 2.2-.9 4.2-2 5.2v1.6c2.5.5 5.3 1.5 5.7 3.3v1.2H.3v-1.2c.4-1.8 3.2-2.8 5.7-3.3v-1.6c-1.1-1-2-3-2-5.2C4 2.9 5 1 7.5 1z" fill="#8b969c"/></svg>
<div class="t" style="left:670px;top:708px;color:#2a2d31;transform:scaleX(0.845);transform-origin:0 0">SUPERVISOR</div>
<svg style="left:887px;top:704px" width="14" height="17"><g fill="#8b969c"><ellipse cx="7" cy="2.8" rx="6.5" ry="2.3"/><path d="M.5 4.3c0 1.3 2.9 2.3 6.5 2.3s6.5-1 6.5-2.3v3.2c0 1.3-2.9 2.3-6.5 2.3S.5 8.8.5 7.5z"/><path d="M.5 9.3c0 1.3 2.9 2.3 6.5 2.3s6.5-1 6.5-2.3v3.2c0 1.3-2.9 2.3-6.5 2.3S.5 13.8.5 12.5z"/></g></svg>
<div class="t u" style="left:908px;top:708px;color:#2a2d31">UCA</div>
<!-- update center -->
<svg style="left:0;top:0" width="1364" height="725">
<rect x="1165.2" y="706" width="12.6" height="3.5" fill="#b3babf"/>
<rect x="1164.1" y="709" width="14.6" height="14.6" fill="#3a8bb8"/>
<path d="M1168.2 708.5v7.5M1165.2 713.2l3 3.8 3-3.8" fill="none" stroke="#c4d82a" stroke-width="2"/>
<g fill="none" stroke="#3a90be" stroke-width="1.35">
<path d="M1183.9 707v5.6a4.5 4.5 0 0 0 9 0v-5.6"/>
<path d="M1196 707v16"/><ellipse cx="1200.3" cy="712.5" rx="4.3" ry="5.2"/>
<ellipse cx="1210.2" cy="712.5" rx="4.5" ry="5.2"/><path d="M1215.9 704v14"/>
<ellipse cx="1223.2" cy="712.5" rx="4.5" ry="5.2"/><path d="M1228.4 707v11"/>
<path d="M1231.6 704v11.5a2.2 2.2 0 0 0 2.6 2.2M1229.6 707.6h4.8"/>
<path d="M1236.3 712.5h9.4a4.7 5.2 0 1 0-1.2 3.5"/>
</g>
<text x="1199" y="722.8" font-family="Liberation Sans" font-size="4" fill="#3a90be" letter-spacing="7.2">center</text>
<path d="M1268 704.8h4.5l4 4.7 2.3-2.3-2.2-2.4h7.2v8.2l-2.4-2.2-2 2 4.8 6.6h-3.2l-4.2-4.2-4.2 4.2h-4.6z" fill="none" stroke="#7b848a" stroke-width="1.5" stroke-linejoin="round"/>
<path d="M1270.8 709.8l2.6 2.8-2.6 2.6z" fill="#7b848a"/>
<g fill="none" stroke="#7b848a" stroke-width="2.1">
<circle cx="1292" cy="711" r="3.4"/><path d="M1295.4 706.5v9"/>
<path d="M1298.6 704v9.3a1.8 1.8 0 0 0 1.9 2"/>
<path d="M1303.8 704v9.3a1.8 1.8 0 0 0 1.9 2M1301.6 707.3h5.4"/>
<path d="M1309.3 711.1h6.8a3.4 3.4 0 1 0-1 2.5"/>
<path d="M1319.8 715.6v-5a3.4 3.4 0 0 1 3.6-3.4"/>
<circle cx="1328.7" cy="711" r="3.4"/><path d="M1332.1 704v11.6"/>
<circle cx="1339.3" cy="711" r="3.4"/><path d="M1342.7 706.5v9"/>
<path d="M1346.7 704v9.3a1.8 1.8 0 0 0 1.9 2M1344.5 707.3h5.2"/>
<circle cx="1354.2" cy="711" r="3.4"/><path d="M1357.6 706.5v9"/>
</g>
<text x="1292.3" y="721.7" font-family="Liberation Sans" font-weight="bold" font-size="4.6" fill="#7b848a" letter-spacing="5.9">software</text>
</svg>
</body></html>
